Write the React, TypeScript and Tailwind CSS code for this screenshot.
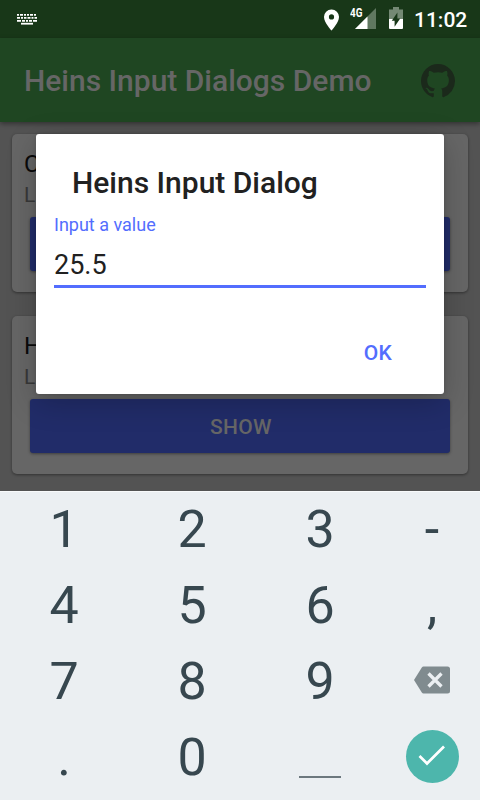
import React from "react";

function StatusBar() {
  return (
    <div className="flex h-[38px] shrink-0 items-center bg-[#183718] text-white">
      <svg className="ml-[17px] h-[12px] w-[20px]" viewBox="0 0 20 12" fill="none" stroke="white">
        <path d="M0 1.900h20" strokeWidth="1.800" strokeDasharray="2 1 3 1 2 1 2 1 3 1" />
        <path d="M0 4.900h20" strokeWidth="1.800" strokeDasharray="3 1 2 1 2.500 1" />
        <path d="M0 7.900h20" strokeWidth="1.800" strokeDasharray="4 1 3 1 2 1 3 1" />
        <path d="M4 10.700h12" strokeWidth="1.800" />
      </svg>
      <svg className="ml-[287px] mt-px h-[22px] w-[15px]" viewBox="0 0 15 22" fill="white">
        <path fillRule="evenodd" d="M7.500 0.500A7.400 7.400 0 0 0 0 8c0 5.600 7.500 13.500 7.500 13.500S15 13.600 15 8A7.400 7.400 0 0 0 7.500.5Zm0 4.800a2.600 2.600 0 1 1 0 5.200 2.600 2.600 0 0 1 0-5.200Z" />
      </svg>
      <div className="relative ml-[11px] h-[22px] w-[26px]">
        <svg className="absolute left-0 top-0 h-[22px] w-[26px]" viewBox="0 0 26 22">
          <path d="M26 0V21H5Z" fill="#607860" />
          <path d="M17.500 8.500V21H5Z" fill="white" />
        </svg>
        <span className="absolute left-0 top-[-2px] origin-left scale-x-[0.76] text-[13px] font-bold leading-[14px]">4G</span>
      </div>
      <svg className="mb-[2px] ml-[13px] h-[22px] w-[14px]" viewBox="0 0 14 22">
        <path d="M4 0h6v2.500h4V12H0V2.500h4Z" fill="#748974" />
        <path d="M0 12h14V21a1 1 0 0 1-1 1H1a1 1 0 0 1-1-1Z" fill="white" />
        <path d="M5.600 19.800v-6.050H2.800L8.400 5.500v6.050h2.800Z" fill="#183718" />
      </svg>
      <span className="ml-[11px] mt-[2px] text-[21px] font-medium leading-6">11:02</span>
    </div>
  );
}

function AppBar() {
  return (
    <header className="relative flex h-[84px] shrink-0 items-center justify-between bg-[#1f4622] pl-6 pr-[25px] shadow-[0_2px_5px_rgba(0,0,0,0.4)]">
      <h1 className="mt-[2px] whitespace-nowrap text-[30px] font-medium leading-9 text-[#666666]">Heins Input Dialogs Demo</h1>
      <svg className="mt-[2px] h-[34px] w-[34px]" viewBox="0 0 16 16" fill="#1b291b">
        <path d="M8 0C3.58 0 0 3.58 0 8c0 3.54 2.29 6.53 5.47 7.59.4.07.55-.17.55-.38 0-.19-.01-.82-.01-1.49-2.01.37-2.53-.49-2.69-.94-.09-.23-.48-.94-.82-1.13-.28-.15-.68-.52-.01-.53.63-.01 1.08.58 1.23.82.72 1.21 1.87.87 2.33.66.07-.52.28-.87.51-1.07-1.78-.2-3.64-.89-3.64-3.95 0-.87.31-1.59.82-2.15-.08-.2-.36-1.02.08-2.12 0 0 .67-.21 2.2.82.64-.18 1.32-.27 2-.27s1.36.09 2 .27c1.53-1.04 2.2-.82 2.2-.82.44 1.1.16 1.92.08 2.12.51.56.82 1.27.82 2.15 0 3.07-1.87 3.75-3.65 3.95.29.25.54.73.54 1.48 0 1.07-.01 1.93-.01 2.2 0 .21.15.46.55.38A8.01 8.01 0 0 0 16 8c0-4.42-3.58-8-8-8Z" />
      </svg>
    </header>
  );
}

function DemoCard({ title, subtitle }: { title: string; subtitle: string }) {
  return (
    <section className="flex h-[158px] shrink-0 flex-col rounded-[5px] bg-[#666666] shadow-[0_1px_3px_rgba(0,0,0,0.4)]">
      <h2 className="ml-3 mt-[15px] text-[24px] leading-[30px] text-[#0a0a0a]">{title}</h2>
      <p className="ml-3 mt-[3px] text-[21px] leading-[26px] text-[#383838]">{subtitle}</p>
      <button className="mx-[18px] mt-[9px] h-[54px] rounded-[3px] bg-[#212c69] pl-[2px] pt-[2px] text-[21px] font-medium leading-6 tracking-[0.3px] text-[#666666] shadow-[0_1px_3px_rgba(0,0,0,0.4)]">
        SHOW
      </button>
    </section>
  );
}

function InputDialog() {
  return (
    <div role="dialog" className="absolute left-9 top-[134px] flex h-[260px] w-[408px] flex-col rounded-[3px] bg-white px-[18px] shadow-[0_8px_30px_rgba(0,0,0,0.22),0_1px_4px_rgba(0,0,0,0.15)]">
      <h2 className="ml-[18px] mt-[31px] whitespace-nowrap text-[30px] font-medium leading-9 text-[#212121]">Heins Input Dialog</h2>
      <label className="mt-[13px] text-[18px] leading-[22px] text-[#536dfe]">Input a value</label>
      <div className="mt-[11px] h-[41px] border-b-[3px] border-[#536dfe] text-[27px] leading-[36px] text-[#212121]">25.5</div>
      <button className="mr-[34px] mt-[53px] self-end text-[21px] font-medium leading-6 tracking-[0.3px] text-[#536dfe]">OK</button>
    </div>
  );
}

function Key({ children }: { children: React.ReactNode }) {
  return <button className="flex items-center justify-center">{children}</button>;
}

function Keypad() {
  return (
    <div className="relative grid h-[309px] shrink-0 grid-cols-[128px_128px_128px_96px] grid-rows-[76px_76px_76px_76px] border-t border-[#f8fafb] bg-[#ebeff2] text-[52px] leading-[76px] text-[#37474f]">
      <Key>1</Key>
      <Key>2</Key>
      <Key>3</Key>
      <Key>-</Key>
      <Key>4</Key>
      <Key>5</Key>
      <Key>6</Key>
      <Key>,</Key>
      <Key>7</Key>
      <Key>8</Key>
      <Key>9</Key>
      <Key>
        <svg className="mb-[4px] h-[28px] w-[36px]" viewBox="0 0 36 28">
          <path d="M9.500.5H33.500a2.500 2.500 0 0 1 2.500 2.500V25a2.500 2.500 0 0 1-2.500 2.500H9.500Q8.500 27.500 7.800 26.500L0 14 7.800 1.500Q8.500.5 9.500.5Z" fill="#808b8f" />
          <path d="m14.500 7.500 13 13m0-13-13 13" stroke="#ebeff2" strokeWidth="3.300" />
        </svg>
      </Key>
      <Key>.</Key>
      <Key>0</Key>
      <Key>
        <span className="mt-[38px] h-[2px] w-[42px] bg-[#6c787e]" />
      </Key>
      <Key>
        <svg className="mb-[4px] h-[54px] w-[54px]" viewBox="0 0 54 54">
          <circle cx="27.500" cy="27.500" r="26.500" fill="#4db6ac" />
          <path d="m14.500 27 7.500 7.500L39 17.500" fill="none" stroke="white" strokeWidth="2.700" />
        </svg>
      </Key>
    </div>
  );
}

export default function App() {
  return (
    <div className="relative flex h-[800px] w-[480px] flex-col overflow-hidden bg-[#535353] font-[Roboto,sans-serif]">
      <StatusBar />
      <AppBar />
      <main className="flex h-[369px] shrink-0 flex-col gap-6 px-3 pt-3">
        <DemoCard title="C" subtitle="L" />
        <DemoCard title="H" subtitle="L" />
      </main>
      <InputDialog />
      <Keypad />
    </div>
  );
}
